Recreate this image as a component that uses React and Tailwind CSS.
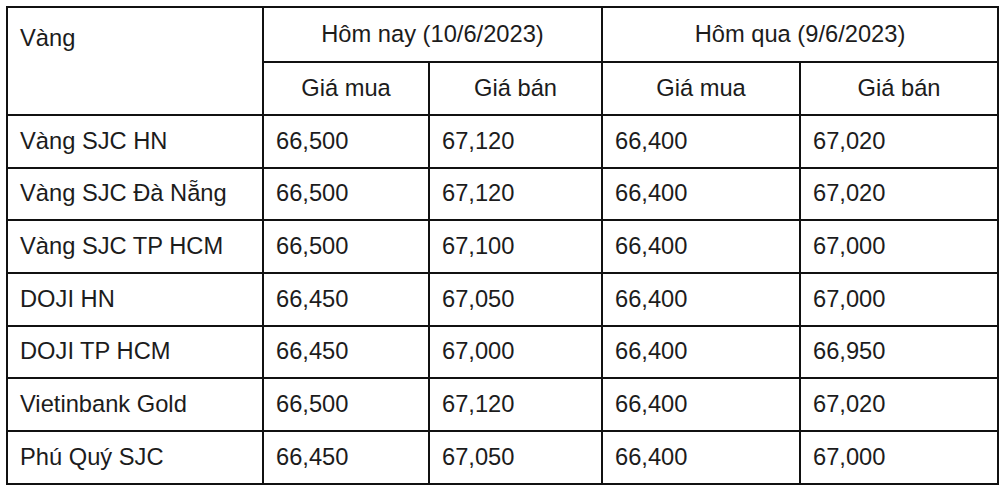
import React from 'react';

const rows = [
  ['Vàng SJC HN', '66,500', '67,120', '66,400', '67,020'],
  ['Vàng SJC Đà Nẵng', '66,500', '67,120', '66,400', '67,020'],
  ['Vàng SJC TP HCM', '66,500', '67,100', '66,400', '67,000'],
  ['DOJI HN', '66,450', '67,050', '66,400', '67,000'],
  ['DOJI TP HCM', '66,450', '67,000', '66,400', '66,950'],
  ['Vietinbank Gold', '66,500', '67,120', '66,400', '67,020'],
  ['Phú Quý SJC', '66,450', '67,050', '66,400', '67,000'],
];

const App = () => {
  const cell = 'border-2 border-[#111] px-3 align-middle';

  return (
    <div className="min-h-screen bg-white pt-[6px] pl-[6px] text-[#1c1c1c] text-[23.7px] font-['Liberation_Sans',Arial,sans-serif]">
      <table className="table-fixed border-collapse w-[991px]">
        <colgroup>
          <col className="w-[256px]" />
          <col className="w-[166px]" />
          <col className="w-[173px]" />
          <col className="w-[198px]" />
          <col className="w-[198px]" />
        </colgroup>
        <thead>
          <tr className="h-[55px]">
            <td rowSpan={2} className="border-2 border-[#111] px-3 align-top pt-[13px] text-left font-normal">
              Vàng
            </td>
            <td colSpan={2} className={cell + ' text-center'}>Hôm nay (10/6/2023)</td>
            <td colSpan={2} className={cell + ' text-center'}>Hôm qua (9/6/2023)</td>
          </tr>
          <tr className="h-[53px]">
            <td className={cell + ' text-center'}>Giá mua</td>
            <td className={cell + ' text-center'}>Giá bán</td>
            <td className={cell + ' text-center'}>Giá mua</td>
            <td className={cell + ' text-center'}>Giá bán</td>
          </tr>
        </thead>
        <tbody>
          {rows.map((r) => (
            <tr key={r[0]} className="h-[52.7px]">
              {r.map((v, i) => (
                <td key={i} className={cell}>{v}</td>
              ))}
            </tr>
          ))}
        </tbody>
      </table>
    </div>
  );
};

export default App;
